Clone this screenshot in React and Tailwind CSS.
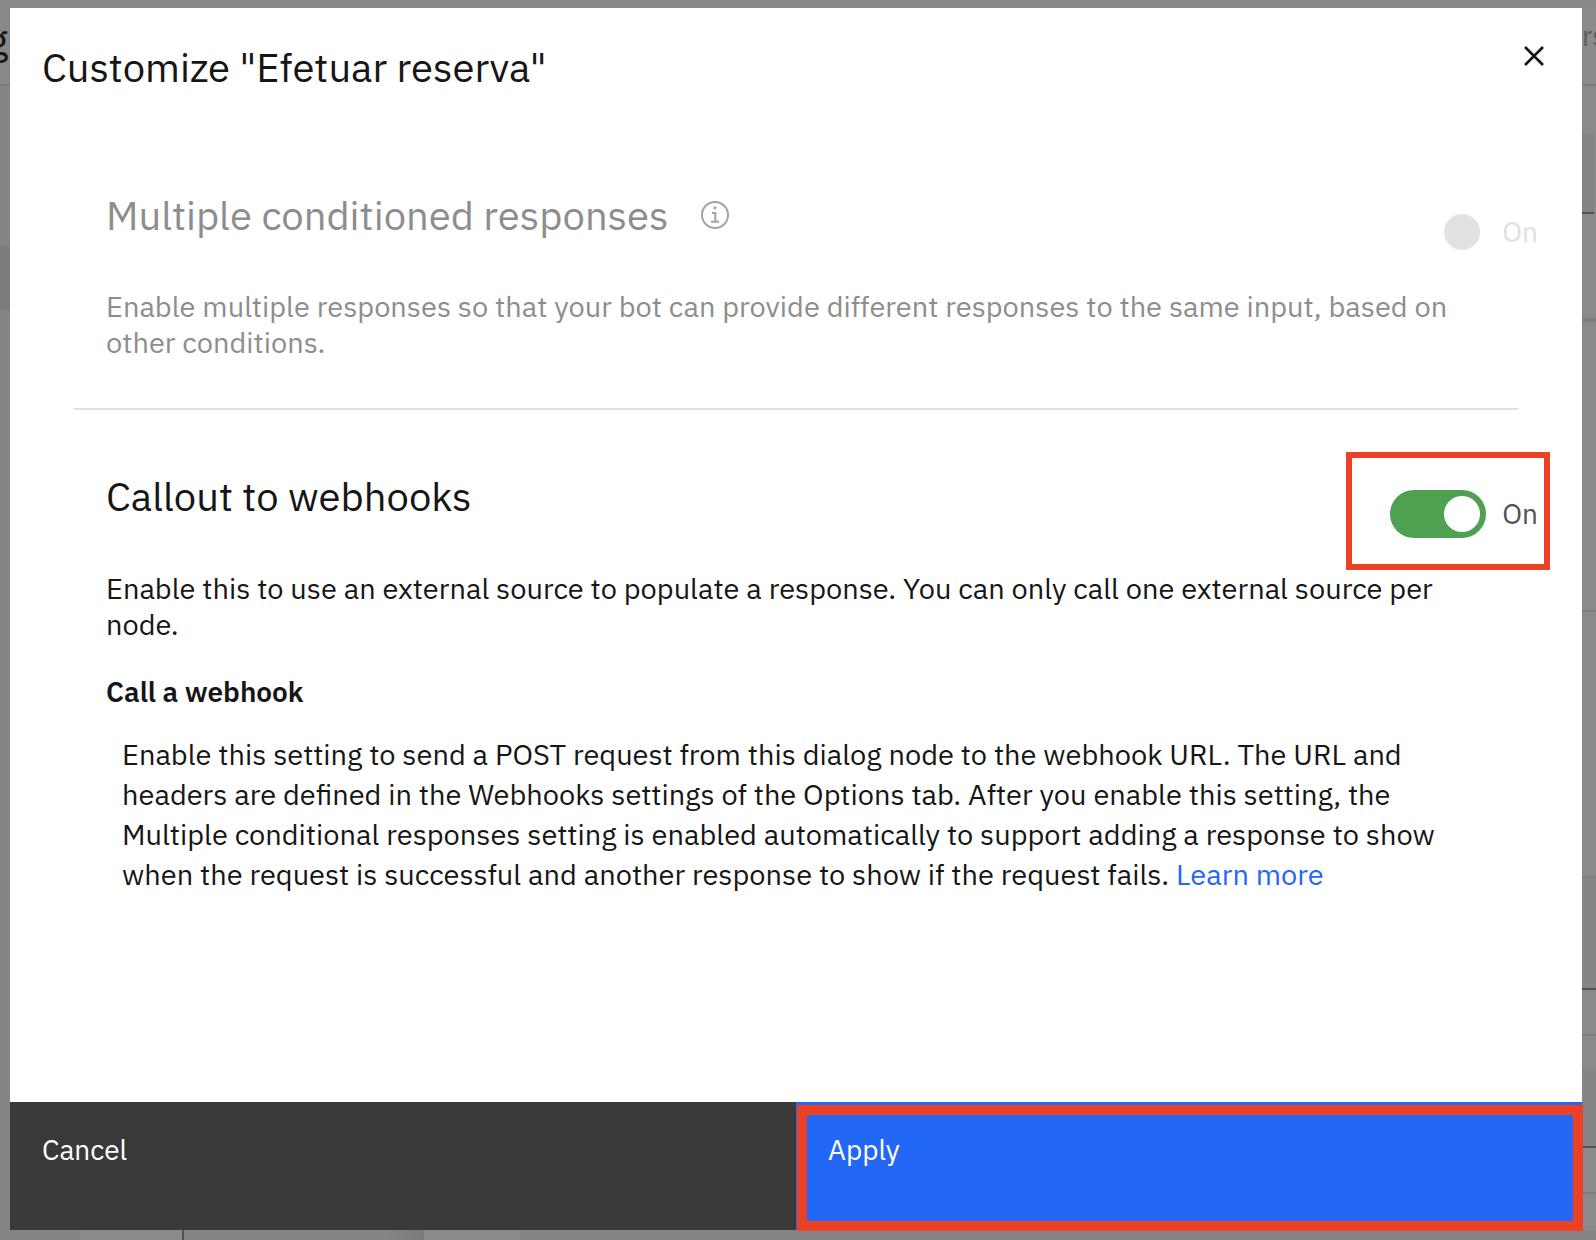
import React, { useState } from "react";

function InfoIcon() {
  return (
    <svg viewBox="0 0 28 28" className="size-7" fill="none" aria-hidden="true">
      <circle cx="14" cy="14" r="13" stroke="#a3a3a3" strokeWidth="2" />
      <circle cx="14" cy="6.8" r="1.6" fill="#a3a3a3" />
      <path d="M11 12h3.3v8.4M10 20.8h8" stroke="#a3a3a3" strokeWidth="2" />
    </svg>
  );
}

function CloseIcon() {
  return (
    <svg viewBox="0 0 20 20" className="size-5" fill="none" aria-hidden="true">
      <path d="M1 1l18 18M19 1L1 19" stroke="#161616" strokeWidth="2.6" />
    </svg>
  );
}

function Toggle({ id, label, checked, disabled, onChange }) {
  return (
    <label
      htmlFor={id}
      className={
        disabled
          ? "flex items-center gap-4 text-[#e0e0e0]"
          : "flex cursor-pointer items-center gap-4 text-[#525252]"
      }
    >
      <input
        id={id}
        type="checkbox"
        role="switch"
        aria-label={label}
        checked={checked}
        disabled={disabled}
        onChange={onChange}
        className="peer sr-only"
      />
      <span
        className={
          disabled
            ? "flex h-12 w-24 items-center justify-end rounded-full p-1.5"
            : checked
              ? "flex h-12 w-24 items-center justify-end rounded-full bg-[#50a052] p-1.5"
              : "flex h-12 w-24 items-center justify-start rounded-full bg-[#8d8d8d] p-1.5"
        }
      >
        <span className={disabled ? "size-9 rounded-full bg-[#e2e2e2]" : "size-9 rounded-full bg-white"} />
      </span>
      <span className="text-[28px] leading-9">{checked ? "On" : "Off"}</span>
    </label>
  );
}

function LeftStrip() {
  return (
    <div className="flex w-2.5 shrink-0 flex-col overflow-hidden bg-[#858585]" aria-hidden="true">
      <div className="flex h-[78px] justify-end border-b-2 border-[#7b7b7b] bg-[#888888] pt-2 pr-0.5 text-[40px] leading-12 text-[#161616]">
        g
      </div>
      <div className="h-40" />
      <div className="h-16 bg-[#7c7c7c]" />
    </div>
  );
}

function RightStrip() {
  return (
    <div className="flex w-3.5 shrink-0 flex-col overflow-hidden bg-[#8a8a8a]" aria-hidden="true">
      <div className="h-[78px] shrink-0 border-b-2 border-[#7b7b7b] pt-2 text-[28px] leading-10 text-[#5c5c5c]">
        rs
      </div>
      <div className="h-12 shrink-0" />
      <div className="h-20 w-3 shrink-0 border-b-2 border-[#525252] bg-[#848484]" />
      <div className="h-[108px] shrink-0 border-b-4 border-[#7d7d7d]" />
      <div className="h-[290px] shrink-0 border-b-2 border-[#7d7d7d]" />
      <div className="h-[266px] shrink-0 border-b-2 border-[#7d7d7d]" />
      <div className="h-28 shrink-0 border-b-2 border-[#525252] bg-[#858585]" />
      <div className="h-[46px] shrink-0 border-b-2 border-[#7d7d7d]" />
      <div className="h-8 shrink-0" />
      <div className="h-20 shrink-0 border-b-2 border-[#525252] bg-[#858585]" />
      <div className="h-[46px] shrink-0 border-b-2 border-[#7d7d7d]" />
    </div>
  );
}

function BottomStrip() {
  return (
    <div className="flex h-2.5 bg-[#858585]" aria-hidden="true">
      <div className="w-20" />
      <div className="w-26 border-r-2 border-[#525252] bg-[#8a8a8a]" />
      <div className="w-50" />
      <div className="w-10 bg-linear-to-r from-[#858585] to-[#7b7b7b]" />
      <div className="w-24 bg-[#8a8a8a]" />
    </div>
  );
}

export default function App() {
  const [webhooks, setWebhooks] = useState(true);
  return (
    <div className="flex min-h-screen flex-col bg-[#858585] font-['IBM_Plex_Sans',Roboto,sans-serif] text-[#161616]">
      <div className="h-2 bg-[#888888]" />
      <div className="flex flex-1">
        <LeftStrip />
        <main
          role="dialog"
          aria-modal="true"
          aria-labelledby="dialog-title"
          className="flex min-w-0 flex-1 flex-col bg-white"
        >
          <header className="flex items-start justify-between px-8 pt-8">
            <h1 id="dialog-title" className="pt-[3px] text-[40px] leading-12">
              Customize "Efetuar reserva"
            </h1>
            <button type="button" aria-label="Close" className="flex size-8 items-center justify-center">
              <CloseIcon />
            </button>
          </header>

          <div className="flex flex-1 flex-col px-16">
            <section className="border-b-2 border-[#e0e0e0] pt-24 pb-12 pl-8">
              <div className="-mr-5 flex items-start justify-between">
                <div className="flex items-center gap-8 text-[#8d8d8d]">
                  <h2 className="text-[40px] leading-14">Multiple conditioned responses</h2>
                  <button type="button" aria-label="More information" disabled>
                    <InfoIcon />
                  </button>
                </div>
                <div className="pt-[21px]">
                  <Toggle id="responses" label="Multiple conditioned responses" checked disabled />
                </div>
              </div>
              <p className="mt-8 max-w-[1352px] text-[29px] leading-9 text-[#8d8d8d]">
                Enable multiple responses so that your bot can provide different responses to the same
                input, based on other conditions.
              </p>
            </section>

            <section className="pt-10.5 pl-8">
              <div className="-mr-8 flex items-start justify-between">
                <h2 className="pt-4 text-[40px] leading-14">Callout to webhooks</h2>
                <div className="border-[6px] border-[#ec4125] pt-8 pr-1.5 pb-6.5 pl-9.5">
                  <Toggle
                    id="webhooks"
                    label="Callout to webhooks"
                    checked={webhooks}
                    onChange={(e) => setWebhooks(e.target.checked)}
                  />
                </div>
              </div>
              <p className="max-w-[1352px] text-[29px] leading-9">
                Enable this to use an external source to populate a response. You can only call one
                external source per node.
              </p>
              <h3 className="mt-8 text-[28px] leading-9 font-semibold">Call a webhook</h3>
              <p className="mt-6 ml-4 max-w-[1320px] text-[29px] leading-10">
                Enable this setting to send a POST request from this dialog node to the webhook URL. The
                URL and headers are defined in the Webhooks settings of the Options tab. After you enable
                this setting, the Multiple conditional responses setting is enabled automatically to
                support adding a response to show when the request is successful and another response to
                show if the request fails.{" "}
                <a href="#learn-more" className="text-[#2466f6]">
                  Learn more
                </a>
              </p>
            </section>
          </div>

          <footer className="grid h-32 grid-cols-2 text-[28px] leading-9 text-white">
            <button type="button" className="flex items-start bg-[#393939] px-8 pt-7.5 text-left">
              Cancel
            </button>
            <button type="button" className="relative flex items-start bg-[#2267f5] px-8 pt-7.5 text-left">
              Apply
              <span className="pointer-events-none absolute top-[3px] -right-px -bottom-px left-px border-10 border-[#ec4125]" />
            </button>
          </footer>
        </main>
        <RightStrip />
      </div>
      <BottomStrip />
    </div>
  );
}
